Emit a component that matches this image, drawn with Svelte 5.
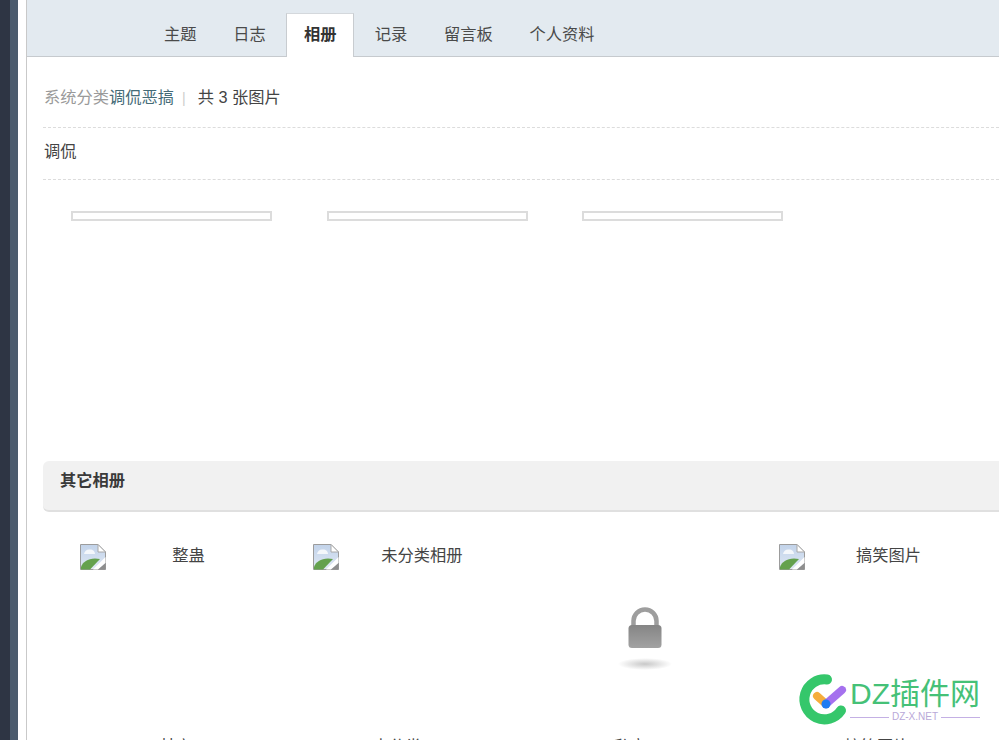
<script>
  const tabs = [
    { label: '主题' },
    { label: '日志' },
    { label: '相册', active: true },
    { label: '记录' },
    { label: '留言板' },
    { label: '个人资料' }
  ];
  const thumbs = [1, 2, 3];
  const albums = [
    { label: '整蛊', kind: 'broken' },
    { label: '未分类相册', kind: 'broken' },
    { label: '', kind: 'lock' },
    { label: '搞笑图片', kind: 'broken' }
  ];
  const lower = [
    { label: '其它', pad: 80 },
    { label: '未分类', pad: 60 },
    { label: '私密', pad: 68 },
    { label: '搞笑图片', pad: 65 }
  ];
</script>

{#snippet broken()}
  <svg class="broken" viewBox="0 0 26 26" aria-hidden="true">
    <defs>
      <linearGradient id="sky" x1="0" y1="0" x2="0" y2="1">
        <stop offset="0" stop-color="#c2d3ea" />
        <stop offset="1" stop-color="#dfe8f4" />
      </linearGradient>
    </defs>
    <path d="M0.500 0.500H18L25.500 8V25.500H0.500Z" fill="url(#sky)" stroke="#9c9c9c" />
    <path d="M18 0.500V8H25.500Z" fill="#fff" stroke="#a8a8a8" />
    <path d="M4 10c0.500-3 3-5 6-4.500 3 0 5 2 5 4.500Z" fill="#f4f7fb" />
    <path d="M1 25.500V23C3 17 10 13 20 15L10 25.500Z" fill="#64a14e" />
    <path d="M25.500 13L13 25.500H18L25.500 19Z" fill="#fff" />
    <path d="M18 25.500L25.500 19V25.500Z" fill="#8e8e8e" />
  </svg>
{/snippet}

<div class="page">
  <div class="rail-dark"></div>
  <div class="rail-slate"></div>
  <div class="gutter"></div>
  <main class="main">
    <nav class="tabs">
      {#each tabs as tab}
        <span class="tab" class:active={tab.active}>{tab.label}</span>
      {/each}
    </nav>

    <div class="content">
      <div class="crumbs">
        <span class="muted">系统分类</span><span class="link">调侃恶搞</span><span class="sep">|</span><span>共 3 张图片</span>
      </div>
      <div class="desc">调侃</div>

      <div class="thumbs">
        {#each thumbs as t}
          <div class="thumb"></div>
        {/each}
      </div>

      <h2 class="other">其它相册</h2>

      <div class="albums">
        {#each albums as album}
          <div class="album">
            {#if album.kind === 'broken'}
              {@render broken()}
              <span class="album-label">{album.label}</span>
            {:else}
              <div class="lock-wrap">
                <svg class="lock" viewBox="0 0 50 66" aria-hidden="true">
                  <defs>
                    <linearGradient id="lockbody" x1="0" y1="0" x2="0" y2="1">
                      <stop offset="0" stop-color="#858585" />
                      <stop offset="1" stop-color="#a2a2a2" />
                    </linearGradient>
                    <radialGradient id="lockshade">
                      <stop offset="0" stop-color="#c8c8c8" />
                      <stop offset="1" stop-color="#ffffff" />
                    </radialGradient>
                  </defs>
                  <path d="M13.500 22V14a11.500 11.500 0 0 1 23 0V22" fill="none" stroke="#9e9e9e" stroke-width="4.500" />
                  <rect x="8.500" y="18" width="33" height="23" rx="3.500" fill="url(#lockbody)" />
                  <ellipse cx="25" cy="57" rx="27" ry="6" fill="url(#lockshade)" />
                </svg>
              </div>
            {/if}
          </div>
        {/each}
        {#each lower as item}
          <div class="lower" style="padding-left: {item.pad}px">{item.label}</div>
        {/each}
      </div>
    </div>
  </main>

  <div class="mark">
    <svg class="mark-icon" viewBox="0 0 50 50" aria-hidden="true">
      <path d="M29 5.500A20 20 0 1 0 43 36.500" fill="none" stroke="#35c76b" stroke-width="10" stroke-linecap="round" />
      <path d="M19 22L28 30" stroke="#f5ad3c" stroke-width="8" stroke-linecap="round" />
      <path d="M28 30L44 16" stroke="#a571ee" stroke-width="8" stroke-linecap="round" />
      <circle cx="28" cy="30" r="4.500" fill="#1f7bf2" />
    </svg>
    <div class="mark-text">
      <div class="mark-name">DZ插件网</div>
      <div class="mark-sub"><i></i><span>DZ-X.NET</span><i></i></div>
    </div>
  </div>
</div>

<style>
  :global(body) {
    margin: 0;
    overflow: hidden;
    background: #fff;
  }
  .page {
    display: flex;
    height: 740px;
    overflow: hidden;
    position: relative;
    font-family: "Liberation Sans", "Noto Sans CJK SC", sans-serif;
    font-size: 16.250px;
    color: #444;
  }
  .rail-dark { width: 10px; flex: none; background: #2e3544; }
  .rail-slate { width: 8px; flex: none; background: #4b5b6d; }
  .gutter { width: 8px; flex: none; background: #fff; }
  .main {
    flex: none;
    width: 973px;
    border-left: 1px solid #c9c9c9;
    box-sizing: border-box;
  }
  .tabs {
    display: flex;
    align-items: flex-end;
    gap: 1px;
    height: 56px;
    box-sizing: content-box;
    padding-left: 119px;
    background: #e3eaf0;
    border-bottom: 1px solid #c6cace;
  }
  .tab {
    padding: 0 17.900px;
    height: 44px;
    line-height: 44px;
    color: #4a4a4a;
    box-sizing: border-box;
  }
  .tab.active {
    margin: 0 1.500px -1px;
    height: 44px;
    padding: 0 16.900px;
    background: #fff;
    border: 1px solid #c8ccd0;
    border-top-color: #d4d8dc;
    border-bottom: 0;
    font-weight: 700;
    color: #333;
    line-height: 41px;
  }
  .content { padding-left: 16px; }
  .crumbs {
    height: 70px;
    line-height: 80px;
    padding-left: 1px;
    border-bottom: 1px dashed #dcdcdc;
    white-space: nowrap;
  }
  .muted { color: #9a9a9a; }
  .link { color: #446b77; }
  .sep { color: #ccc; margin: 0 12px 0 8px; font-size: 14px; }
  .desc {
    height: 51px;
    line-height: 46px;
    padding-left: 1px;
    border-bottom: 1px dashed #dcdcdc;
  }
  .thumbs {
    display: flex;
    gap: 54.500px;
    height: 281px;
    padding: 31px 0 0 28px;
    box-sizing: border-box;
  }
  .thumb {
    width: 201px;
    height: 10px;
    box-sizing: border-box;
    border: 2px solid #dcdcdc;
  }
  .other {
    margin: 0 -10px 0 0;
    height: 51px;
    box-sizing: border-box;
    padding-left: 17px;
    font-size: 16.250px;
    font-weight: 700;
    line-height: 38px;
    color: #3a3a3a;
    background: #f1f1f1;
    border-bottom: 2px solid #e0e0e0;
    border-radius: 6px;
  }
  .albums {
    display: grid;
    grid-template-columns: repeat(4, 233.300px);
    grid-template-rows: 190px 40px;
    padding: 32px 0 0 36.500px;
  }
  .album {
    display: flex;
    align-items: flex-start;
    position: relative;
  }
  .broken { width: 26px; height: 26px; flex: none; }
  .album-label {
    width: 166px;
    text-align: center;
    line-height: 22px;
  }
  .lock-wrap { padding: 63px 0 0 74px; }
  .lock { width: 50px; height: 66px; display: block; overflow: visible; }
  .lower {
    line-height: 24px;
    white-space: nowrap;
  }
  .mark {
    position: absolute;
    left: 798px;
    top: 674px;
    display: flex;
    gap: 2px;
  }
  .mark-icon { width: 50px; height: 50px; flex: none; overflow: visible; }
  .mark-text { width: 130px; }
  .mark-name {
    font-size: 30px;
    line-height: 36px;
    color: #45c177;
    white-space: nowrap;
    margin-top: 2px;
  }
  .mark-sub {
    display: flex;
    align-items: center;
    gap: 3px;
    font-size: 10px;
    line-height: 10px;
    color: #b9a8d8;
  }
  .mark-sub i {
    flex: 1;
    height: 1px;
    background: #c4b0e4;
  }
</style>
